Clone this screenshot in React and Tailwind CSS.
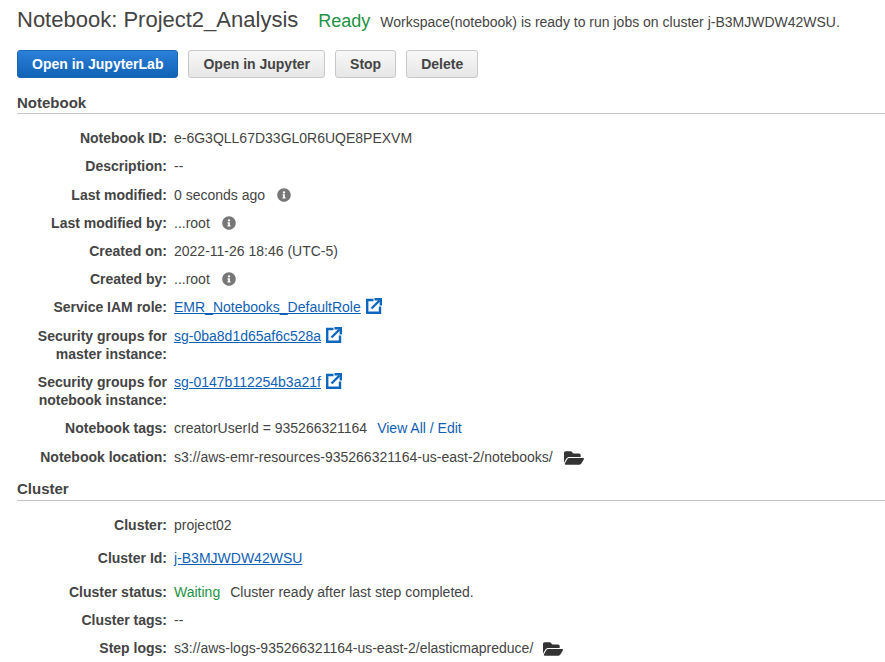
import { FaInfoCircle, FaFolderOpen } from 'react-icons/fa';

function ExternalIcon() {
  return (
    <svg width="16" height="16" viewBox="0 0 16 16" fill="none" stroke="#0f67bd" strokeWidth="2.4" className="ml-[5px] shrink-0">
      <path d="M7.5 2H1.2v12.8H14V8.5" />
      <path d="M5.5 10.5 13.5 2.5" />
      <path d="M8.5 1.2h6.3v6.3" />
    </svg>
  );
}

function Info() {
  return <FaInfoCircle className="ml-[12px] text-[14px] text-[#777]" />;
}

function Row({ label, children, className = 'mb-[10px]' }) {
  return (
    <div className={`flex leading-[18px] ${className}`}>
      <div className="w-[150px] shrink-0 text-right font-bold text-[#444]">{label}</div>
      <div className="ml-[7px] flex items-start">{children}</div>
    </div>
  );
}

function Link({ children }) {
  return <a className="text-[#0f5fb5] underline">{children}</a>;
}

function Section({ title, className = 'leading-[22px]' }) {
  return (
    <div className={`h-[22px] border-b border-[#c4c4c4] text-[15px] font-bold text-[#444] ${className}`}>{title}</div>
  );
}

function Btn({ children, primary }) {
  const tone = primary
    ? 'bg-gradient-to-b from-[#2b80d8] to-[#0f62b5] border-[#1a66b3] text-white'
    : 'bg-gradient-to-b from-[#f8f8f8] to-[#e6e6e6] border-[#c9c9c9] text-[#444]';
  return (
    <button className={`h-[28px] rounded-[3px] border px-[14px] text-[14px] font-bold ${tone}`}>{children}</button>
  );
}

export default function App() {
  return (
    <div className="h-[662px] overflow-hidden bg-white pl-[17px] text-[14px] text-[#444] font-['Liberation_Sans',Arial,sans-serif]">
      <div className="flex h-[41px] items-baseline pt-[5px] whitespace-nowrap">
        <h1 className="text-[22px] leading-[30px] text-[#444]">Notebook: Project2_Analysis</h1>
        <span className="ml-[20px] text-[18px] text-[#1e9245]">Ready</span>
        <span className="ml-[10px] text-[14px]">Workspace(notebook) is ready to run jobs on cluster j-B3MJWDW42WSU.</span>
      </div>

      <div className="mt-[9px] flex gap-[10px]">
        <Btn primary>Open in JupyterLab</Btn>
        <Btn>Open in Jupyter</Btn>
        <Btn>Stop</Btn>
        <Btn>Delete</Btn>
      </div>

      <div className="mt-[14px]"><Section title="Notebook" /></div>

      <div className="mt-[15px]">
        <Row label="Notebook ID:">e-6G3QLL67D33GL0R6UQE8PEXVM</Row>
        <Row label="Description:" className="mb-[11px]">--</Row>
        <Row label="Last modified:"><span>0 seconds ago</span><span className="mt-[2px]"><Info /></span></Row>
        <Row label="Last modified by:"><span>...root</span><span className="mt-[2px]"><Info /></span></Row>
        <Row label="Created on:">2022-11-26 18:46 (UTC-5)</Row>
        <Row label="Created by:"><span>...root</span><span className="mt-[2px]"><Info /></span></Row>
        <Row label="Service IAM role:" className="mb-[11px]"><Link>EMR_Notebooks_DefaultRole</Link><ExternalIcon /></Row>
        <Row label={<>Security groups for<br />master instance:</>}><Link>sg-0ba8d1d65af6c528a</Link><ExternalIcon /></Row>
        <Row label={<>Security groups for<br />notebook instance:</>}><Link>sg-0147b112254b3a21f</Link><ExternalIcon /></Row>
        <Row label="Notebook tags:" className="mb-[11px]">
          <span>creatorUserId = 935266321164</span>
          <a className="ml-[10px] text-[#0f5fb5]">View All / Edit</a>
        </Row>
        <Row label="Notebook location:">
          <span>s3://aws-emr-resources-935266321164-us-east-2/notebooks/</span>
          <FaFolderOpen className="ml-[11px] text-[20px] text-[#333]" />
        </Row>
      </div>

      <div className="mt-[11px]"><Section title="Cluster" className="leading-[20px]" /></div>

      <div className="mt-[15px]">
        <Row label="Cluster:" className="mb-[15px]">project02</Row>
        <Row label="Cluster Id:" className="mb-[16px]"><Link>j-B3MJWDW42WSU</Link></Row>
        <Row label="Cluster status:">
          <span className="text-[#1e9245]">Waiting</span>
          <span className="ml-[10px]">Cluster ready after last step completed.</span>
        </Row>
        <Row label="Cluster tags:">--</Row>
        <Row label="Step logs:">
          <span>s3://aws-logs-935266321164-us-east-2/elasticmapreduce/</span>
          <FaFolderOpen className="ml-[10px] text-[20px] text-[#333]" />
        </Row>
      </div>
    </div>
  );
}
